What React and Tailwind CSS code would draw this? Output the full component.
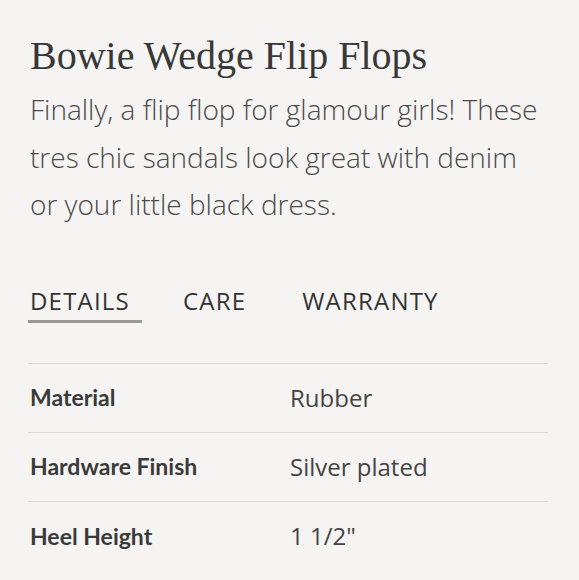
import React from 'react';

const specs = [
  { label: 'Material', value: 'Rubber' },
  { label: 'Hardware Finish', value: 'Silver plated' },
  { label: 'Heel Height', value: '1 1/2"' },
];

const tabs = ['DETAILS', 'CARE', 'WARRANTY'];

export default function App() {
  return (
    <div className="min-h-[580px] w-[579px] bg-[#f5f4f2] text-[#3d3d3d] pl-[30px] pr-[31px] pt-[32px] font-['Open_Sans',sans-serif]">
      <h1 className="font-['Liberation_Serif',serif] text-[40px] leading-[48px] text-[#383838]">
        Bowie Wedge Flip Flops
      </h1>
      <p className="mt-[6px] text-[28px] font-light leading-[47.5px] text-[#4a4a4a]">
        Finally, a flip flop for glamour girls! These
        <br />
        tres chic sandals look great with denim
        <br />
        or your little black dress.
      </p>

      <div className="mt-[57px] flex items-start">
        {tabs.map((t, i) => (
          <div
            key={t}
            className={'flex flex-col ' + (i === 0 ? 'mr-[41px]' : i === 1 ? 'mr-[56px]' : '')}
          >
            <span className="text-[24px] leading-[30px] tracking-[1.2px] font-medium text-[#333]">{t}</span>
            {i === 0 && <span className="mt-[4px] h-[3px] -ml-[2px] w-[114px] bg-[#999]" />}
          </div>
        ))}
      </div>

      <div className="mt-[40px] border-t border-[#dcdbd8] -ml-[2px]">
        {specs.map((s, i) => (
          <div
            key={s.label}
            className={
              'flex items-center h-[69px] pl-[2px] ' +
              (i < specs.length - 1 ? 'border-b border-[#dcdbd8]' : '')
            }
          >
            <span className="w-[260px] font-['Lato',sans-serif] text-[23px] font-bold text-[#3a3a3a]">{s.label}</span>
            <span className="text-[24px] text-[#444]">{s.value}</span>
          </div>
        ))}
      </div>
    </div>
  );
}
